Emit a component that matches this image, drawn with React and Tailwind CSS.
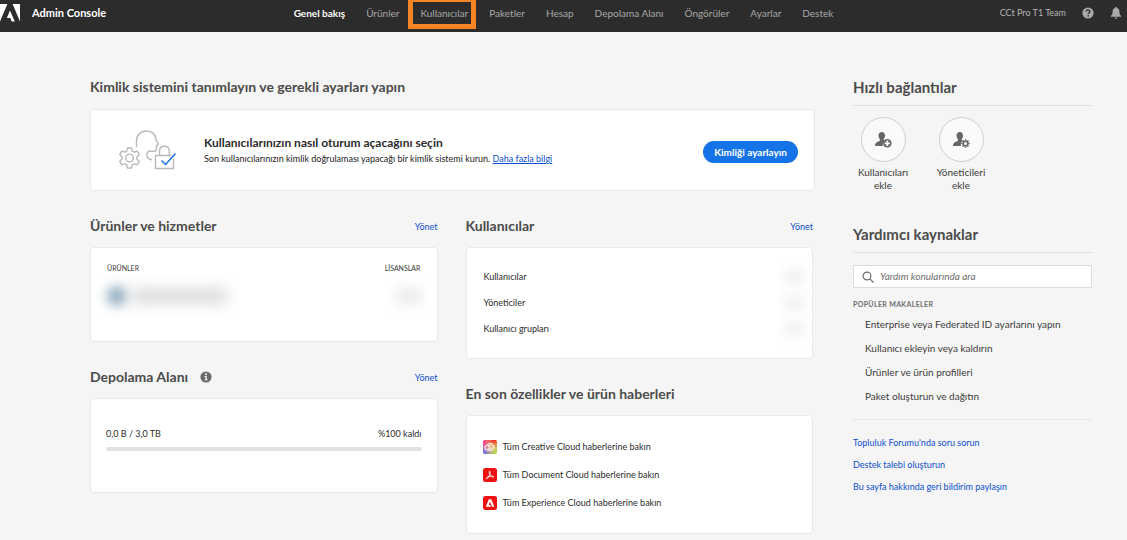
import React, { useState } from "react";

const navItems = [
  "Genel bakış",
  "Ürünler",
  "Kullanıcılar",
  "Paketler",
  "Hesap",
  "Depolama Alanı",
  "Öngörüler",
  "Ayarlar",
  "Destek",
];

const articles = [
  "Enterprise veya Federated ID ayarlarını yapın",
  "Kullanıcı ekleyin veya kaldırın",
  "Ürünler ve ürün profilleri",
  "Paket oluşturun ve dağıtın",
];

const supportLinks = [
  "Topluluk Forumu'nda soru sorun",
  "Destek talebi oluşturun",
  "Bu sayfa hakkında geri bildirim paylaşın",
];

const AdobeLogo = () => (
  <svg viewBox="0 0 20 18" className="h-[18px] w-5" aria-hidden="true">
    <path d="M0 0h7.4L0 17.6zM12.6 0H20v17.6zM10 6.6l4.8 11h-3.1l-1.5-3.6H6.8z" fill="#fff" />
  </svg>
);

const HelpIcon = () => (
  <svg viewBox="0 0 12 12" className="h-3 w-3" aria-hidden="true">
    <circle cx="6" cy="6" r="5.6" fill="#a9a9a9" />
    <path d="M4.2 4.5c.1-1.1.9-1.6 1.9-1.6s1.8.6 1.8 1.5c0 1.3-1.7 1.3-1.7 2.7" fill="none" stroke="#2c2c2c" strokeWidth="1.3" />
    <circle cx="6.2" cy="8.9" r=".8" fill="#2c2c2c" />
  </svg>
);

const BellIcon = () => (
  <svg viewBox="0 0 12 12" className="h-3 w-3" aria-hidden="true">
    <path d="M6 0c.6 0 1 .4 1 1 1.7.5 2.4 1.8 2.4 3.5 0 2.5.6 3.6 1.8 4.5v.8H.8V9c1.2-.9 1.8-2 1.8-4.5C2.600 2.800 3.300 1.500 5 1c0-.6.4-1 1-1z" fill="#a9a9a9" />
    <path d="M4.7 10.5h2.6c0 .8-.6 1.4-1.3 1.4s-1.3-.6-1.3-1.4z" fill="#a9a9a9" />
  </svg>
);

const InfoIcon = () => (
  <svg viewBox="0 0 12 12" className="h-3 w-3" aria-hidden="true">
    <circle cx="6" cy="6" r="5.6" fill="#6a6a6a" />
    <circle cx="6" cy="3.2" r="1" fill="#f5f5f5" />
    <path d="M4.6 5h2.2v3.3h.8v1H4.6v-1h.8V6h-.8z" fill="#f5f5f5" />
  </svg>
);

const IdentityIcon = () => (
  <svg viewBox="0 0 58 41" className="h-[41px] w-[58px]" fill="none" stroke="#b9b9b9" strokeWidth="1.4" strokeLinejoin="round" aria-hidden="true">
    <path d="M18.500 17.500V11C18.500 5 22.500 1 28.500 1c5.500 0 9.500 3.500 9.500 8.500 0 1.500 2.400 4 2.400 5 0 .8-2 .7-2 1.500v3c0 1.500-1 2.300-2.500 2.300h-4c-1.500 0-3 1-3 3.500s2 4.700 5 5" />
    <path d="M9.500 18h4l.8 3.200 1.800 1 3.200-1 2 3.400-2.400 2.300v2.200l2.400 2.300-2 3.400-3.200-1-1.800 1-.8 3.200h-4l-.8-3.200-1.800-1-3.200 1-2-3.400 2.400-2.300v-2.200l-2.400-2.300 2-3.400 3.200 1 1.800-1z" />
    <circle cx="11.5" cy="28" r="3.9" />
    <path d="M55.500 29v9.500h-18V25.500h16" />
    <path d="M41.500 25.500v-4.300c0-3 2-4.900 4.900-4.900s4.900 1.900 4.900 4.900v4.300" />
    <path d="M43.500 30.500l4 4 10-11" stroke="#2a7de1" strokeWidth="1.7" />
  </svg>
);

const PersonShape = () => (
  <path d="M6.800 0c2 0 3.200 1.500 3.200 3.500 0 1.400-.5 2.700-1.200 3.500v1.200l1 .6c-1.300.9-2 2.200-2 3.700l.1 1.500H0c0-3 1.500-4.100 4.800-5V7C4 6.200 3.500 4.900 3.500 3.500 3.500 1.500 4.800 0 6.800 0z" fill="#666" />
);

const AddUserIcon = () => (
  <svg viewBox="0 0 17 16" className="h-4 w-[17px]" aria-hidden="true">
    <PersonShape />
    <circle cx="12.3" cy="11.3" r="4.3" fill="#666" />
    <path d="M12.300 8.600v5.400M9.600 11.300h5.400" stroke="#fafafa" strokeWidth="1.8" />
  </svg>
);

const AddAdminIcon = () => (
  <svg viewBox="0 0 17 16" className="h-4 w-[17px]" aria-hidden="true">
    <PersonShape />
    <circle cx="12.5" cy="11.5" r="2.3" fill="none" stroke="#666" strokeWidth="1.5" />
    <path d="M12.500 7.300v1.500M12.500 14.200v1.500M8.300 11.500h1.500M15.200 11.500h1.500M9.500 8.500l1.100 1.100M14.400 13.400l1.100 1.100M9.500 14.500l1.100-1.100M14.400 9.600l1.100-1.100" stroke="#666" strokeWidth="1.5" />
  </svg>
);

const CreativeCloudIcon = () => (
  <svg viewBox="0 0 14 14" className="h-3.5 w-3.5" aria-hidden="true">
    <defs>
      <linearGradient id="ccBase" x1="0" y1="0" x2="1" y2="1">
        <stop offset="0" stopColor="#f0209a" />
        <stop offset=".5" stopColor="#f8b070" />
        <stop offset="1" stopColor="#9be04a" />
      </linearGradient>
      <radialGradient id="ccRed" cx=".8" cy="0" r=".7">
        <stop offset="0" stopColor="#f01818" />
        <stop offset="1" stopColor="#f0a030" stopOpacity="0" />
      </radialGradient>
      <radialGradient id="ccBlue" cx="0" cy="1" r=".8">
        <stop offset="0" stopColor="#3468f5" />
        <stop offset="1" stopColor="#a070f0" stopOpacity="0" />
      </radialGradient>
    </defs>
    <rect width="14" height="14" rx="2" fill="url(#ccBase)" />
    <rect width="14" height="14" rx="2" fill="url(#ccRed)" />
    <rect width="14" height="14" rx="2" fill="url(#ccBlue)" />
    <path d="M4.600 10.300a2.600 2.600 0 0 1-.2-5.200c.9-1.400 2.300-1.800 3.700-1.600 1.700.2 3.200 1.700 3.200 3.500s-1.300 3.300-3.200 3.300zM4.400 5.100c1.300 0 2 .7 3.700 2.500M6.500 8c-1.500-1.800.2-3.400 1.500-3.300 1.500.1 2.200 1.300 2 2.500-.2 1-1 1.600-2.200 1.600H4.500" fill="none" stroke="#fff" strokeWidth="1" />
  </svg>
);

const DocumentCloudIcon = () => (
  <svg viewBox="0 0 14 14" className="h-3.5 w-3.5" aria-hidden="true">
    <rect width="14" height="14" rx="2.5" fill="#ee1111" />
    <path d="M6.500 3.200c1-.2.9 1.800.3 3.200-.7 1.700-2 4-3 4.300-.9.200-.7-1 1-1.700 1.500-.7 3.400-1.100 4.900-.9 1.600.3 1.200 1.400 0 1C8.200 8.600 6.600 6.900 6.200 5c-.2-1 0-1.700.3-1.800z" fill="none" stroke="#fff" strokeWidth=".9" />
  </svg>
);

const ExperienceCloudIcon = () => (
  <svg viewBox="0 0 14 14" className="h-3.5 w-3.5" aria-hidden="true">
    <rect width="14" height="14" rx="2.5" fill="#ee1111" />
    <path d="M5.800 3.300h2.500l3 7.500H9.100L7 5.800 5.700 9h1.600l.7 1.800H2.800z" fill="#fff" />
  </svg>
);

const news = [
  { icon: CreativeCloudIcon, text: "Tüm Creative Cloud haberlerine bakın" },
  { icon: DocumentCloudIcon, text: "Tüm Document Cloud haberlerine bakın" },
  { icon: ExperienceCloudIcon, text: "Tüm Experience Cloud haberlerine bakın" },
];

const SectionHeader = ({ title, children, manage }) => (
  <div className="mb-[11px] flex h-5 items-center justify-between">
    <div className="flex items-center gap-3">
      <h2 className="text-[14px] leading-5 font-bold text-[#4b4b4b]">{title}</h2>
      {children}
    </div>
    {manage && (
      <a href="#" className="pt-0.5 text-[9px] leading-5 text-[#0d4fd0]">
        Yönet
      </a>
    )}
  </div>
);

const Header = () => (
  <header className="grid h-8 grid-cols-[1fr_auto_1fr] items-center bg-[#2c2c2c] pb-1.5">
    <a href="#" className="flex items-center gap-3 text-[11px] leading-4 font-bold text-white">
      <AdobeLogo />
      Admin Console
    </a>
    <nav className="flex gap-[21px] text-[10px] leading-4">
      {navItems.map((item) => (
        <a
          key={item}
          href="#"
          className={item === "Genel bakış" ? "relative font-bold text-white" : "relative text-[#a8a8a8]"}
        >
          {item}
          {item === "Kullanıcılar" && (
            <span className="absolute -top-2 -right-2 -bottom-2 -left-3 border-[5px] border-[#f98425]" />
          )}
        </a>
      ))}
    </nav>
    <div className="flex items-center justify-end gap-4 pr-[5px] text-[9px] leading-4 text-[#b4b4b4]">
      <span>CCt Pro T1 Team</span>
      <button aria-label="Yardım">
        <HelpIcon />
      </button>
      <button aria-label="Bildirimler">
        <BellIcon />
      </button>
    </div>
  </header>
);

const IdentityCard = () => (
  <section>
    <div className="mb-3 flex h-5 items-center">
      <h2 className="text-[14px] leading-5 font-bold text-[#4b4b4b]">
        Kimlik sistemini tanımlayın ve gerekli ayarları yapın
      </h2>
    </div>
    <div className="flex h-[82px] items-center rounded border border-[#e9e9e9] bg-white pr-4 pl-[27px]">
      <IdentityIcon />
      <div className="ml-7 flex-1 pt-0.5">
        <h3 className="text-[12px] leading-4 font-bold text-[#2c2c2c]">
          Kullanıcılarınızın nasıl oturum açacağını seçin
        </h3>
        <p className="text-[9px] leading-4 text-[#1c1c1c]">
          Son kullanıcılarınızın kimlik doğrulaması yapacağı bir kimlik sistemi kurun.{" "}
          <a href="#" className="text-[#0d4fd0] underline">
            Daha fazla bilgi
          </a>
        </p>
      </div>
      <button className="mt-1 h-[22px] rounded-full bg-[#1473e6] px-[11px] text-[10px] font-bold text-white">
        Kimliği ayarlayın
      </button>
    </div>
  </section>
);

const ProductsCard = () => (
  <section>
    <SectionHeader title="Ürünler ve hizmetler" manage />
    <div className="h-[95px] rounded border border-[#e9e9e9] bg-white px-4 pt-3">
      <table className="w-full text-[7px] leading-4 text-[#3c3c3c]">
        <thead>
          <tr>
            <th className="text-left font-normal">ÜRÜNLER</th>
            <th className="text-right font-normal">LİSANSLAR</th>
          </tr>
        </thead>
        <tbody>
          <tr>
            <td className="pt-2.5">
              <div className="flex items-center gap-1">
                <div className="h-5 w-5 rounded-full bg-[#8fa9bd] blur-[6px]" />
                <div className="h-4 w-24 bg-[#dcdcdc] blur-[7px]" />
              </div>
            </td>
            <td className="pt-2.5">
              <div className="ml-auto h-4 w-6 bg-[#ebebeb] blur-[6px]" />
            </td>
          </tr>
        </tbody>
      </table>
    </div>
  </section>
);

const StorageCard = () => (
  <section>
    <SectionHeader title="Depolama Alanı" manage>
      <button aria-label="Bilgi">
        <InfoIcon />
      </button>
    </SectionHeader>
    <div className="h-[95px] rounded border border-[#e9e9e9] bg-white px-[15px] pt-[27px]">
      <div className="flex justify-between text-[9px] leading-4 text-[#2c2c2c]">
        <span>0,0 B / 3,0 TB</span>
        <span>%100 kaldı</span>
      </div>
      <div className="mt-[5px] h-1 rounded-full bg-[#e1e1e1]" />
    </div>
  </section>
);

const UsersCard = () => (
  <section>
    <SectionHeader title="Kullanıcılar" manage />
    <div className="h-28 rounded border border-[#e9e9e9] bg-white pt-4 pr-2 pl-[17px]">
      <table className="w-full text-[9px] text-[#2c2c2c]">
        <tbody>
          {["Kullanıcılar", "Yöneticiler", "Kullanıcı grupları"].map((label) => (
            <tr key={label} className="h-[26px]">
              <th className="text-left font-normal">{label}</th>
              <td>
                <div className="ml-auto h-4 w-5 bg-[#f3f3f3] blur-[5px]" />
              </td>
            </tr>
          ))}
        </tbody>
      </table>
    </div>
  </section>
);

const NewsCard = () => (
  <section>
    <SectionHeader title="En son özellikler ve ürün haberleri" />
    <div className="h-[119px] rounded border border-[#e9e9e9] bg-white px-4 pt-[17px]">
      <ul className="text-[9px] text-[#2c2c2c]">
        {news.map(({ icon: Icon, text }) => (
          <li key={text}>
            <a href="#" className="flex h-7 items-center gap-1.5">
              <Icon />
              {text}
            </a>
          </li>
        ))}
      </ul>
    </div>
  </section>
);

const Sidebar = () => {
  const [query, setQuery] = useState("");

  return (
    <aside className="w-[239px] shrink-0">
      <h2 className="border-b border-[#dedede] pb-2 text-[15px] leading-5 font-bold text-[#4b4b4b]">
        Hızlı bağlantılar
      </h2>
      <div className="mt-[11px] flex gap-[18px] text-center text-[10px] leading-[13px] text-[#3c3c3c]">
        <button className="flex w-[60px] flex-col items-center gap-1">
          <span className="flex h-[45px] w-[45px] items-center justify-center rounded-full border border-[#cfcfcf] bg-[#fafafa]">
            <AddUserIcon />
          </span>
          Kullanıcıları ekle
        </button>
        <button className="flex w-[60px] flex-col items-center gap-1">
          <span className="flex h-[45px] w-[45px] items-center justify-center rounded-full border border-[#cfcfcf] bg-[#fafafa]">
            <AddAdminIcon />
          </span>
          Yöneticileri ekle
        </button>
      </div>

      <h2 className="mt-8 border-b border-[#dedede] pb-2 text-[15px] leading-5 font-bold text-[#4b4b4b]">
        Yardımcı kaynaklar
      </h2>
      <label className="mt-3 flex h-[23px] items-center gap-1.5 border border-[#dcdcdc] bg-white px-2">
        <svg viewBox="0 0 12 12" className="h-3 w-3" fill="none" stroke="#6e6e6e" strokeWidth="1.2" aria-hidden="true">
          <circle cx="5" cy="5" r="3.9" />
          <path d="M7.900 7.900l3.600 3.600" />
        </svg>
        <input
          type="search"
          value={query}
          onChange={(e) => setQuery(e.target.value)}
          placeholder="Yardım konularında ara"
          aria-label="Yardım konularında ara"
          className="min-w-0 flex-1 text-[10px] italic outline-none placeholder:text-[#6e6e6e]"
        />
      </label>
      <h3 className="mt-2 text-[7px] leading-4 font-bold tracking-wider text-[#6e6e6e]">
        POPÜLER MAKALELER
      </h3>
      <ul className="border-b border-[#e6e6e6] pb-[11px] pl-3 text-[10px] leading-6 text-[#3c3c3c]">
        {articles.map((article) => (
          <li key={article}>
            <a href="#">{article}</a>
          </li>
        ))}
      </ul>
      <ul className="mt-3 text-[9px] leading-[22px] text-[#0d4fd0]">
        {supportLinks.map((link) => (
          <li key={link}>
            <a href="#">{link}</a>
          </li>
        ))}
      </ul>
    </aside>
  );
};

const App = () => {
  return (
    <div className="min-h-screen bg-[#f5f5f5] font-['Lato',sans-serif]">
      <Header />
      <div className="flex gap-[38px] pt-[45px] pr-[35px] pl-[90px]">
        <main className="min-w-0 flex-1">
          <IdentityCard />
          <div className="mt-[25px] grid grid-cols-2 gap-7 pr-0.5">
            <div className="flex flex-col gap-[25px]">
              <ProductsCard />
              <StorageCard />
            </div>
            <div className="flex flex-col gap-[25px]">
              <UsersCard />
              <NewsCard />
            </div>
          </div>
        </main>
        <Sidebar />
      </div>
    </div>
  );
};

export default App;
